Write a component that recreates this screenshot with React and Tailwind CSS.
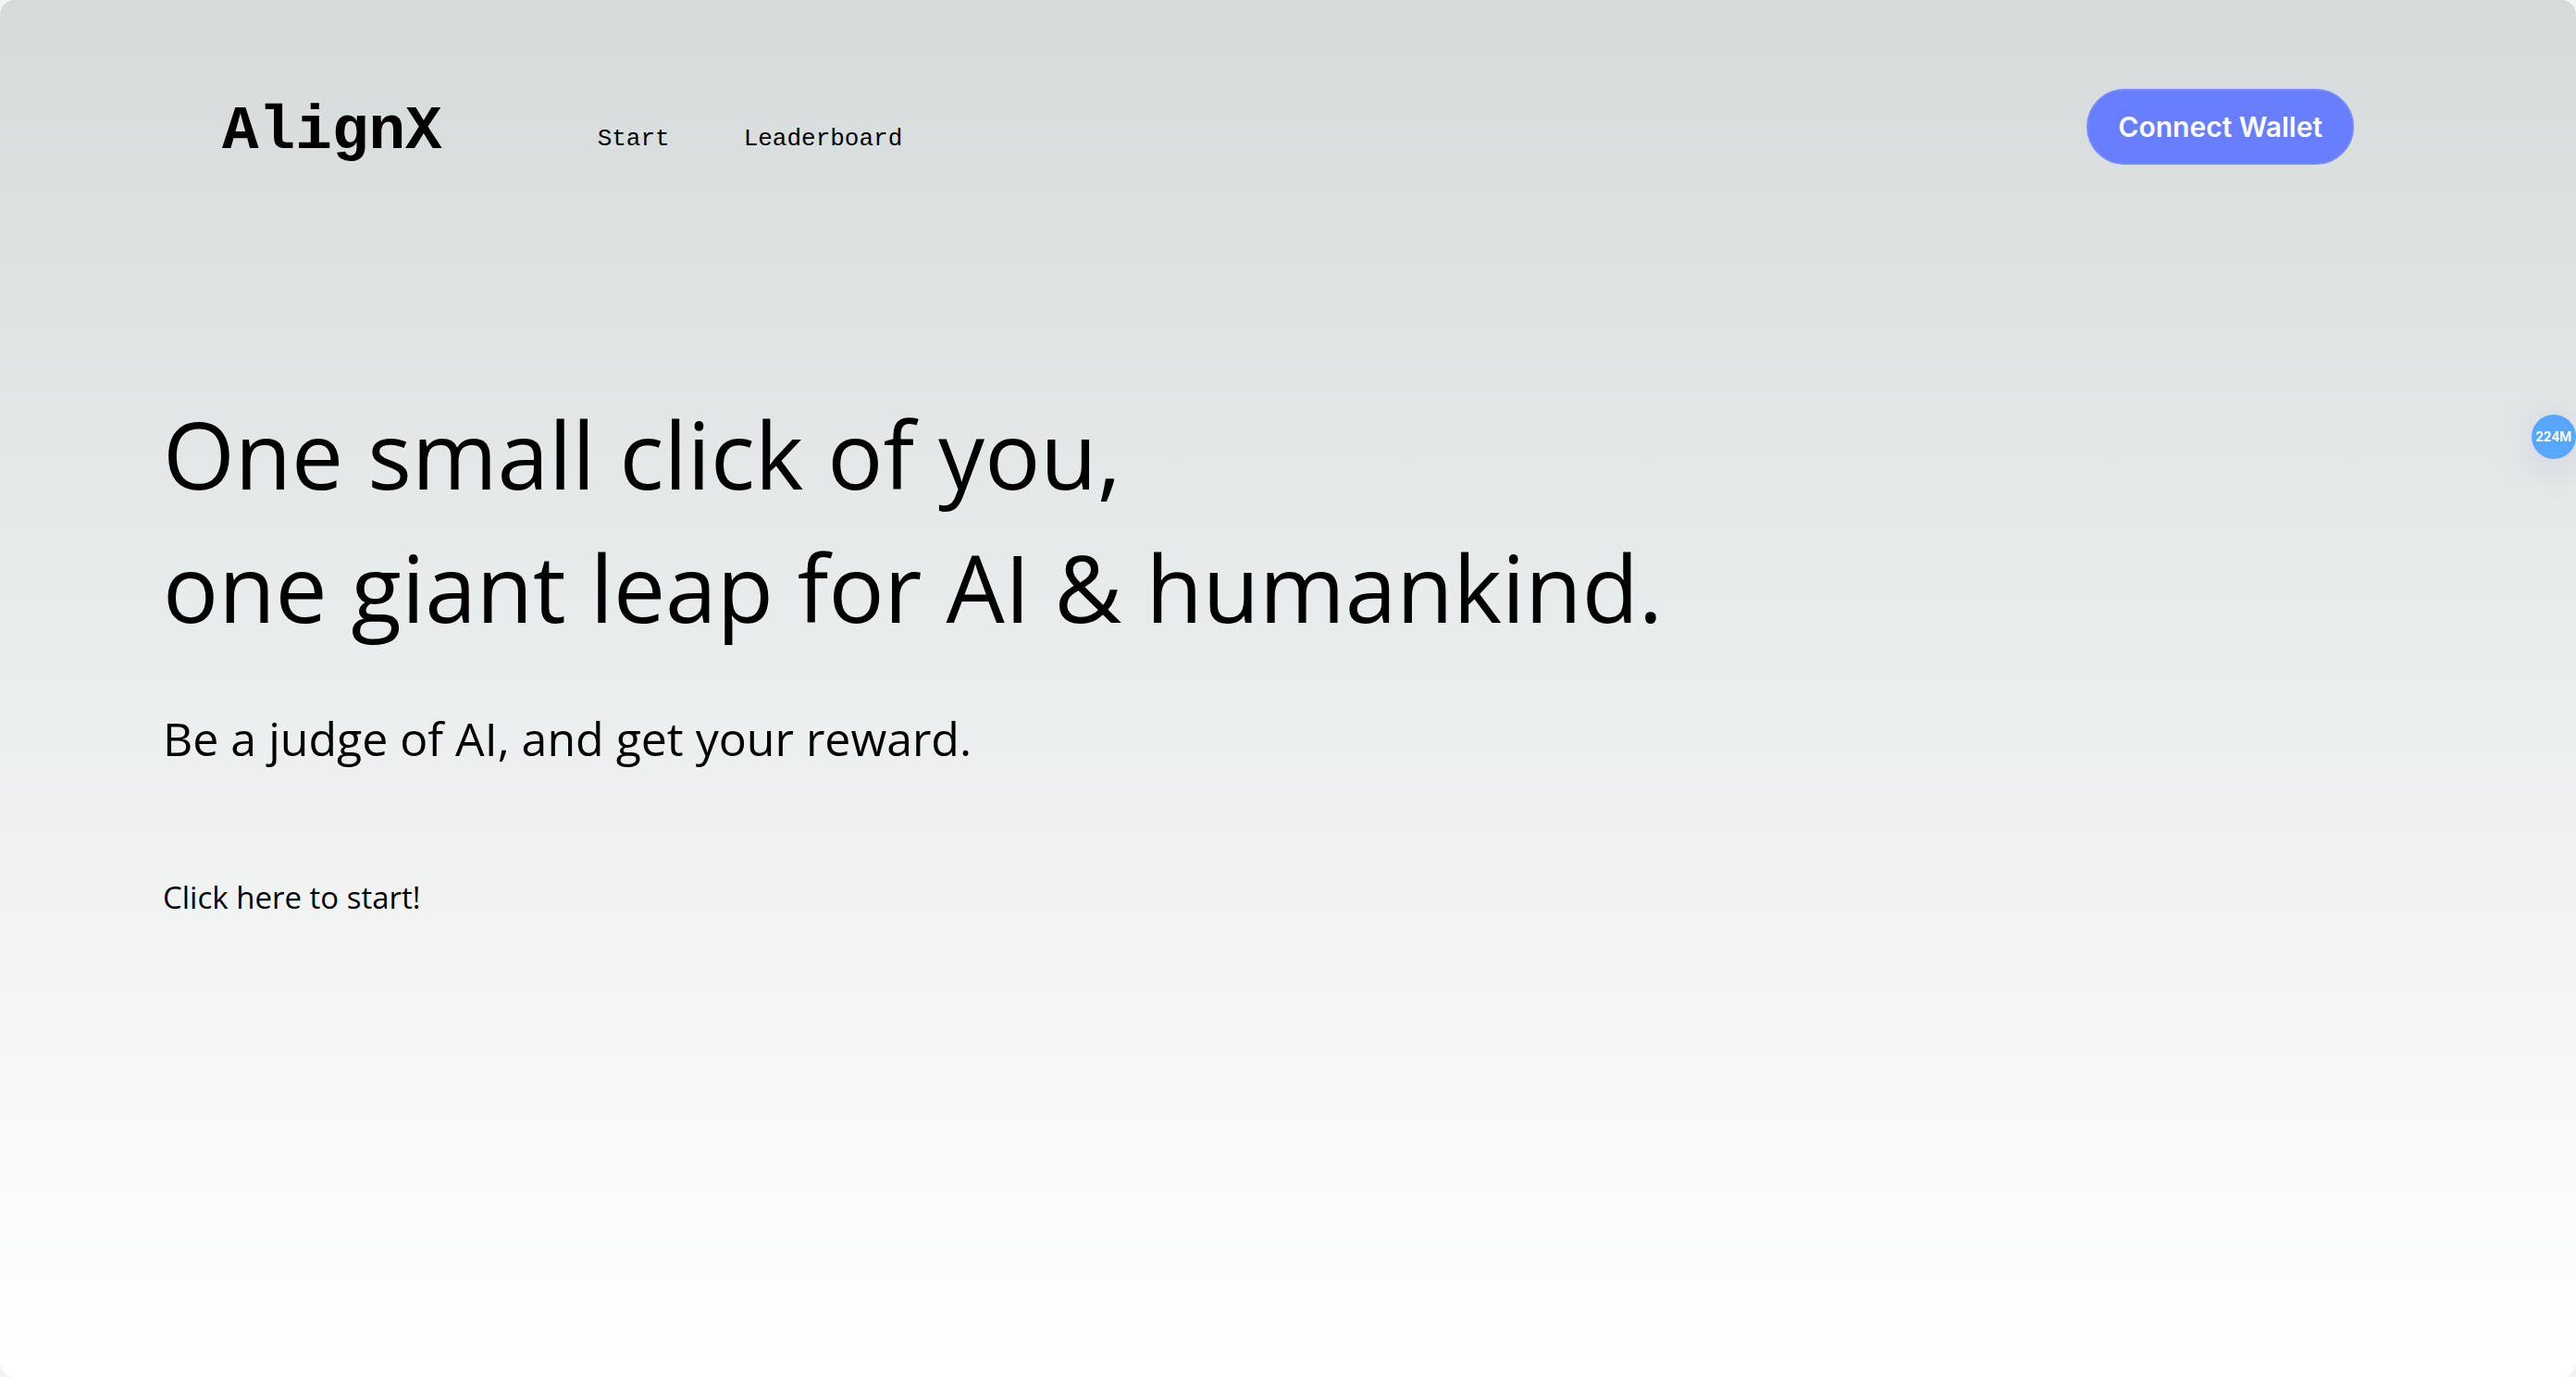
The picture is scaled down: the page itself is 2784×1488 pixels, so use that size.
const navLinks = ["Start", "Leaderboard"];

function Header() {
  return (
    <header className="flex items-start justify-between px-60 pt-24">
      <div className="flex items-start font-['Liberation_Mono',monospace]">
        <a href="#home" className="text-[66px] leading-[94px] font-bold">
          AlignX
        </a>
        <nav className="mt-9 ml-42 flex gap-20 text-[26px] leading-9">
          {navLinks.map((label) => (
            <a key={label} href={`#${label.toLowerCase()}`}>
              {label}
            </a>
          ))}
        </nav>
      </div>
      <button
        type="button"
        className="rounded-full border-2 border-[#758aff] bg-[#667eff] px-8 py-5 font-['Inter',sans-serif] text-[30px] leading-[38px] font-semibold whitespace-nowrap text-white"
      >
        Connect Wallet
      </button>
    </header>
  );
}

function Hero() {
  return (
    <main className="flex flex-col items-start px-44 pt-57 font-['Open_Sans',sans-serif]">
      <h1 className="text-[100px] leading-36">
        One small click of you,
        <br />
        one giant leap for AI &amp; humankind.
      </h1>
      <p className="mt-14 text-[50px] leading-18">
        Be a judge of AI, and get your reward.
      </p>
      <a href="#start" className="mt-28 text-[33px] leading-12">
        Click here to start!
      </a>
    </main>
  );
}

export default function App() {
  return (
    <div className="min-h-screen bg-[#f3f3f3]">
      <div className="min-h-screen rounded-2xl bg-linear-to-b from-[#d5dbda] via-[#ebeeee] to-white text-black">
        <Header />
        <Hero />
      </div>
      <button
        type="button"
        className="fixed top-112 right-0 size-12 rounded-full bg-[#57a6ff] text-center font-['Roboto',sans-serif] text-[15px] leading-none font-bold text-white shadow-[0_8px_40px_rgba(120,120,220,0.2)]"
      >
        224M
      </button>
    </div>
  );
}
